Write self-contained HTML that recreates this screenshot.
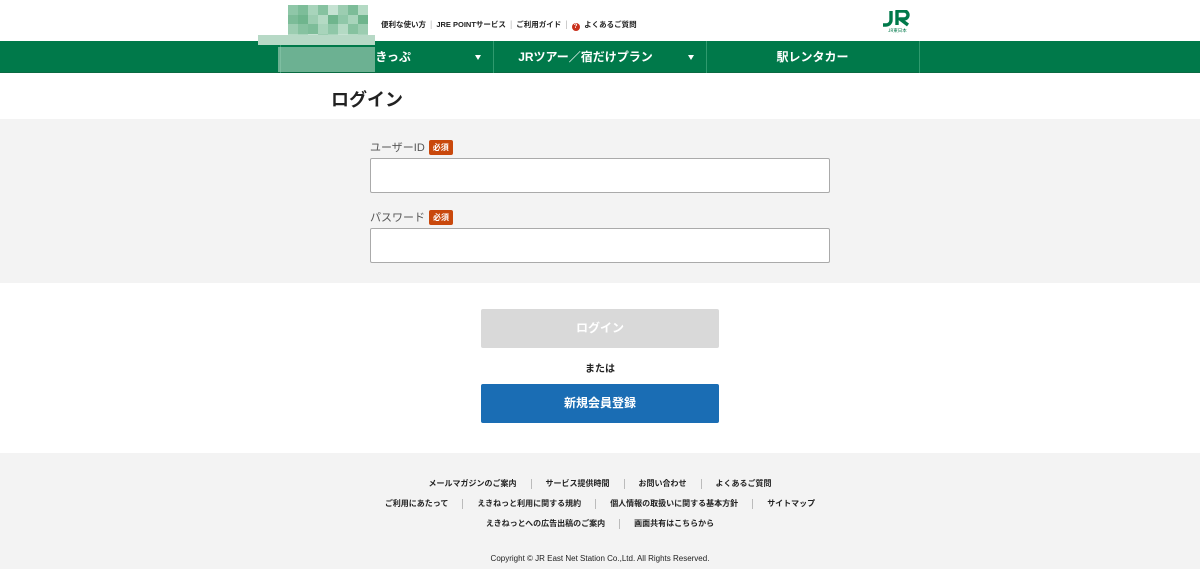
<!DOCTYPE html>
<html><head><meta charset="utf-8"><style>
*{margin:0;padding:0;box-sizing:border-box}
body{width:1200px;height:569px;overflow:hidden;background:#fff;font-family:"Liberation Sans","Noto Sans CJK JP",sans-serif;color:#222;position:relative}
.abs{position:absolute}
.top a{font-size:7.5px;font-weight:bold;color:#222;text-decoration:none}
.top .s{color:#bbb;margin:0 4px;font-size:9px}
.nav{top:41px;left:0;width:1200px;height:32px;background:#00794a;border-bottom:1px solid #0a6a42}
.nav .it{position:absolute;top:0;height:32px;line-height:32px;color:#fff;font-size:12px;font-weight:bold;text-align:center}
.sep{position:absolute;top:0;width:1px;height:32px;background:#2f9a6e}
.arrow{position:absolute;top:14px;width:0;height:0;border-left:3.5px solid transparent;border-right:3.5px solid transparent;border-top:5px solid #fff}
.form{top:119px;left:0;width:1200px;height:164px;background:#f3f3f3}
.lbl{font-size:11px;color:#555}
.req{display:inline-block;background:#c9480c;color:#fff;font-size:8px;font-weight:bold;padding:2px 4px;border-radius:2px;margin-left:4px;vertical-align:1px}
.inp{width:460px;height:35px;background:#fff;border:1px solid #aaa;border-radius:2px}
.foot{top:453px;left:0;width:1200px;height:116px;background:#f3f3f3}
.fl{position:absolute;left:0;width:1200px;text-align:center;font-size:8px;font-weight:bold;color:#222}
.fl span{display:inline-block;padding:0 14px;border-left:1px solid #bbb;line-height:10px}
.fl span:first-child{border-left:none}
</style></head><body>
<div class="abs" style="left:258px;top:5px;width:117px;height:68px;z-index:5">
 <div class="abs" style="left:30px;top:0;width:80px;height:38px;display:grid;grid-template-columns:repeat(8,10px);grid-auto-rows:9.5px">
  <i style="background:#8fc7a8"></i><i style="background:#7dbd99"></i><i style="background:#a8d4bb"></i><i style="background:#86c2a0"></i><i style="background:#c5e2d2"></i><i style="background:#9ccdb1"></i><i style="background:#7cbc98"></i><i style="background:#b4dac4"></i>
  <i style="background:#7cbc98"></i><i style="background:#6fb58d"></i><i style="background:#9ccdb1"></i><i style="background:#b4dac4"></i><i style="background:#6fb58d"></i><i style="background:#8fc7a8"></i><i style="background:#a8d4bb"></i><i style="background:#6fb58d"></i>
  <i style="background:#9ccdb1"></i><i style="background:#86c2a0"></i><i style="background:#7dbd99"></i><i style="background:#a8d4bb"></i><i style="background:#8fc7a8"></i><i style="background:#b4dac4"></i><i style="background:#86c2a0"></i><i style="background:#9ccdb1"></i>
  <i style="background:#b4dac4"></i><i style="background:#a8d4bb"></i><i style="background:#c5e2d2"></i><i style="background:#9ccdb1"></i><i style="background:#a8d4bb"></i><i style="background:#c5e2d2"></i><i style="background:#b4dac4"></i><i style="background:#a8d4bb"></i>
 </div>
 <div class="abs" style="left:0;top:30px;width:117px;height:10px;background:#b7d9c6"></div>
 <div class="abs" style="left:20px;top:42px;width:97px;height:25px;background:rgba(180,215,195,.6)"></div>
</div>
<div class="abs top" style="left:381px;top:14px;white-space:nowrap">
 <a>便利な使い方</a><span class="s">|</span><a>JRE POINTサービス</a><span class="s">|</span><a>ご利用ガイド</a><span class="s">|</span><span style="display:inline-block;width:8px;height:8px;border-radius:50%;background:#c9301c;color:#fff;font-size:6px;text-align:center;line-height:8px;vertical-align:-1px;font-weight:bold">?</span> <a>よくあるご質問</a>
</div>
<svg class="abs" style="left:882px;top:10px" width="30" height="24" viewBox="0 0 30 24">
 <path d="M9 1v9a5 5 0 0 1-5 5H1" stroke="#00794a" stroke-width="3.4" fill="none"/>
 <path d="M15 15V1h7a4 4 0 0 1 0 8h-4l8 6" stroke="#00794a" stroke-width="3.4" fill="none" stroke-linejoin="round"/>
 <text x="6" y="22" font-size="4.5" fill="#00794a" font-family="Noto Sans CJK JP">JR東日本</text>
</svg>
<div class="abs nav">
 <div class="sep" style="left:280px"></div>
 <div class="sep" style="left:493px"></div>
 <div class="sep" style="left:706px"></div>
 <div class="sep" style="left:919px"></div>
 <div class="it" style="left:280px;width:213px">&nbsp;&nbsp;&nbsp;&nbsp;きっぷ</div>
 <div class="arrow" style="left:475px"></div>
 <div class="it" style="left:493px;width:185px">JRツアー／宿だけプラン</div>
 <div class="arrow" style="left:688px"></div>
 <div class="it" style="left:706px;width:213px">駅レンタカー</div>
</div>
<div class="abs" style="left:331px;top:86px;font-size:18px;font-weight:bold;color:#222">ログイン</div>
<div class="abs form">
 <div class="abs lbl" style="left:370px;top:20px">ユーザーID<span class="req">必須</span></div>
 <div class="abs inp" style="left:370px;top:39px"></div>
 <div class="abs lbl" style="left:370px;top:90px">パスワード<span class="req">必須</span></div>
 <div class="abs inp" style="left:370px;top:109px"></div>
</div>
<div class="abs" style="left:481px;top:309px;width:238px;height:39px;background:#d9d9d9;border-radius:2px;color:#fff;font-size:12px;font-weight:bold;text-align:center;line-height:39px">ログイン</div>
<div class="abs" style="left:0;top:360px;width:1200px;text-align:center;font-size:10px;font-weight:bold">または</div>
<div class="abs" style="left:481px;top:384px;width:238px;height:39px;background:#1a6db4;border-radius:2px;color:#fff;font-size:12px;font-weight:bold;text-align:center;line-height:39px">新規会員登録</div>
<div class="abs foot">
 <div class="fl" style="top:26px"><span>メールマガジンのご案内</span><span>サービス提供時間</span><span>お問い合わせ</span><span>よくあるご質問</span></div>
 <div class="fl" style="top:46px"><span>ご利用にあたって</span><span>えきねっと利用に関する規約</span><span>個人情報の取扱いに関する基本方針</span><span>サイトマップ</span></div>
 <div class="fl" style="top:66px"><span>えきねっとへの広告出稿のご案内</span><span>画面共有はこちらから</span></div>
 <div class="fl" style="top:101px;font-weight:normal">Copyright © JR East Net Station Co.,Ltd. All Rights Reserved.</div>
</div>
</body></html>
